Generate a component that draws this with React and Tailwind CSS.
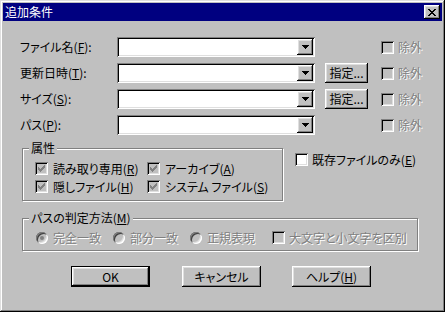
import React from "react";

const raised =
  "shadow-[inset_-1px_-1px_0_#000,inset_1px_1px_0_#fff,inset_-2px_-2px_0_#808080,inset_2px_2px_0_#dfdfdf]";
const sunken =
  "shadow-[inset_1px_1px_0_#808080,inset_-1px_-1px_0_#fff,inset_2px_2px_0_#000,inset_-2px_-2px_0_#dfdfdf]";
const dis = "text-[#808080] [text-shadow:1px_1px_0_#fff]";

function Pix({ rows, color, w, h }) {
  const rects = [];
  rows.forEach((r, y) => {
    for (let x = 0; x < r.length; x++) {
      if (r[x] === "#") rects.push(<rect key={x + "-" + y} x={x} y={y} width="1" height="1" fill={color} />);
    }
  });
  return (
    <svg width={w} height={h} viewBox={`0 0 ${w} ${h}`} shapeRendering="crispEdges">
      {rects}
    </svg>
  );
}

const CHECK = ["......#", ".....##", "#...###", "##.###.", "#####..", ".###...", "..#...."];
const XMARK = ["##....##", ".##..##.", "..####..", "...##...", "..####..", ".##..##.", "##....##"];
const ARROW = ["#######", ".#####.", "..###..", "...#..."];

function U({ children }) {
  return <span className="underline underline-offset-[1px]">{children}</span>;
}

function CheckBox({ checked, disabled, white }) {
  return (
    <div
      className={`w-[13px] h-[13px] shrink-0 flex items-center justify-center ${sunken} ${
        white ? "bg-white" : "bg-[#c0c0c0]"
      }`}
    >
      {checked && <Pix rows={CHECK} color={disabled ? "#808080" : "#000"} w={7} h={7} />}
    </div>
  );
}

function Radio({ selected }) {
  return (
    <div className="w-[12px] h-[12px] shrink-0 rounded-full bg-[#c0c0c0] flex items-center justify-center shadow-[inset_1px_1px_0_#808080,inset_-1px_-1px_0_#fff,inset_2px_2px_0_#404040,inset_-2px_-2px_0_#dfdfdf]">
      {selected && <div className="w-[4px] h-[4px] rounded-full bg-[#808080]" />}
    </div>
  );
}

function Combo() {
  return (
    <div className={`w-[198px] h-[20px] bg-white p-[2px] flex justify-end ${sunken}`}>
      <div className={`w-[16px] h-[16px] bg-[#c0c0c0] flex items-center justify-center ${raised}`}>
        <Pix rows={ARROW} color="#000" w={7} h={4} />
      </div>
    </div>
  );
}

function Row({ label, spec }) {
  return (
    <div className="flex items-center h-[20px]">
      <div className="w-[97px] whitespace-nowrap">{label}</div>
      <Combo />
      {spec ? (
        <div className={`ml-[10px] w-[43px] h-[20px] flex items-center justify-center bg-[#c0c0c0] ${raised}`}>
          指定...
        </div>
      ) : (
        <div className="ml-[10px] w-[43px] h-[20px]" />
      )}
      <div className="ml-[13px]">
        <CheckBox />
      </div>
      <span className={`ml-[4px] ${dis}`}>除外</span>
    </div>
  );
}

export default function App() {
  return (
    <div
      className="w-[445px] h-[312px] bg-[#c0c0c0] p-[3px] text-[12px] leading-[12px] text-black font-['Noto_Sans_CJK_JP',sans-serif] [font-feature-settings:'palt'] shadow-[inset_-1px_-1px_0_#000,inset_1px_1px_0_#dfdfdf,inset_-2px_-2px_0_#808080,inset_2px_2px_0_#fff] overflow-hidden"
    >
      <div className="h-[18px] bg-[#000080] flex items-center justify-between pl-[2px] pr-[2px]">
        <span className="text-white">追加条件</span>
        <div className={`w-[16px] h-[14px] bg-[#c0c0c0] flex items-center justify-center ${raised}`}>
          <Pix rows={XMARK} color="#000" w={8} h={7} />
        </div>
      </div>

      <div className="pl-[17px] pt-[16px] flex flex-col gap-[6px]">
        <Row label={<>ファイル名(<U>F</U>):</>} />
        <Row label={<>更新日時(<U>T</U>):</>} spec />
        <Row label={<>サイズ(<U>S</U>):</>} spec />
        <Row label={<>パス(<U>P</U>):</>} />
      </div>

      <div className="ml-[19px] mt-[13px] flex items-start">
        <div className="relative w-[261px] h-[53px] border border-[#808080] shadow-[1px_1px_0_#fff,inset_1px_1px_0_#fff] pt-[13px] pl-[12px]">
          <span className="absolute left-[6px] top-[-7px] px-[2px] bg-[#c0c0c0]">属性</span>
          <div className="flex flex-col gap-[5px]">
            <div className="flex items-center h-[13px]">
              <div className="w-[112px] flex items-center gap-[5px]">
                <CheckBox checked disabled />
                <span className="whitespace-nowrap">読み取り専用(<U>R</U>)</span>
              </div>
              <div className="flex items-center gap-[5px]">
                <CheckBox checked disabled />
                <span className="whitespace-nowrap">アーカイブ(<U>A</U>)</span>
              </div>
            </div>
            <div className="flex items-center h-[13px]">
              <div className="w-[112px] flex items-center gap-[5px]">
                <CheckBox checked disabled />
                <span className="whitespace-nowrap">隠しファイル(<U>H</U>)</span>
              </div>
              <div className="flex items-center gap-[5px]">
                <CheckBox checked disabled />
                <span className="whitespace-nowrap">システム ファイル(<U>S</U>)</span>
              </div>
            </div>
          </div>
        </div>
        <div className="ml-[12px] mt-[5px] flex items-center gap-[4px]">
          <CheckBox white />
          <span className="whitespace-nowrap">既存ファイルのみ(<U>E</U>)</span>
        </div>
      </div>

      <div className="ml-[19px] mt-[17px] relative w-[396px] h-[33px] border border-[#808080] shadow-[1px_1px_0_#fff,inset_1px_1px_0_#fff] pt-[12px] pl-[13px]">
        <span className="absolute left-[6px] top-[-7px] px-[2px] bg-[#c0c0c0] whitespace-nowrap">
          パスの判定方法(<U>M</U>)
        </span>
        <div className="flex items-center h-[13px]">
          <div className="w-[77px] flex items-center gap-[5px]">
            <Radio selected />
            <span className={dis}>完全一致</span>
          </div>
          <div className="w-[77px] flex items-center gap-[5px]">
            <Radio />
            <span className={dis}>部分一致</span>
          </div>
          <div className="w-[82px] flex items-center gap-[5px]">
            <Radio />
            <span className={dis}>正規表現</span>
          </div>
          <div className="flex items-center gap-[4px]">
            <CheckBox />
            <span className={`whitespace-nowrap ${dis}`}>大文字と小文字を区別</span>
          </div>
        </div>
      </div>

      <div className="mt-[15px] ml-[68px] flex">
        <div className="w-[79px] h-[21px] border border-black">
          <div className={`w-full h-full flex items-center justify-center bg-[#c0c0c0] ${raised}`}>OK</div>
        </div>
        <div className={`ml-[32px] w-[79px] h-[21px] flex items-center justify-center bg-[#c0c0c0] ${raised}`}>
          キャンセル
        </div>
        <div className={`ml-[31px] w-[79px] h-[21px] flex items-center justify-center bg-[#c0c0c0] ${raised}`}>
          ヘルプ(<U>H</U>)
        </div>
      </div>
    </div>
  );
}
